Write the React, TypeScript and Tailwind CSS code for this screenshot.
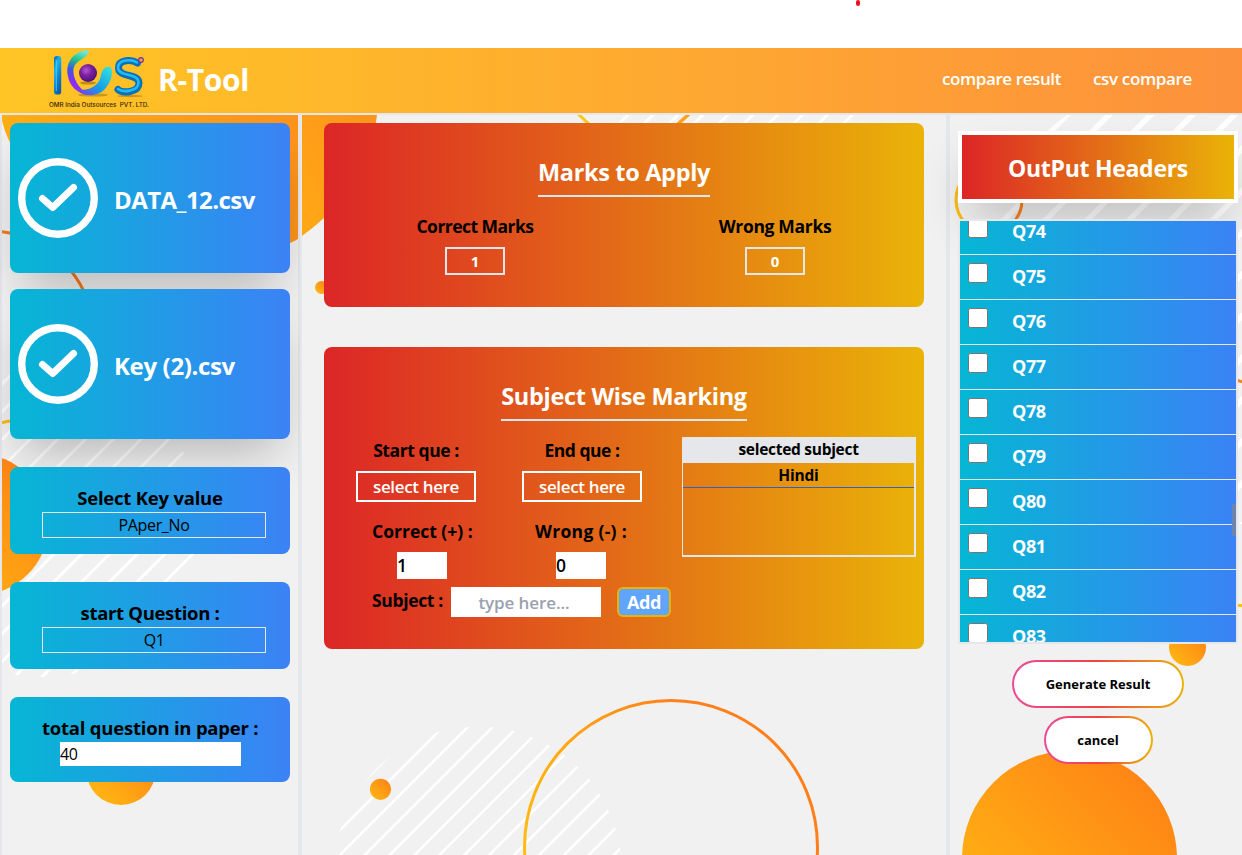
import type { ReactNode } from 'react';

const stripes = (first: number, gap: number, count: number, bottom: number, width: number) =>
  Array.from({ length: count }, (_, k) => {
    const sum = first + gap * k;
    return <line key={k} x1={sum} y1={0} x2={sum - bottom} y2={bottom} stroke="#fff" strokeWidth={width} />;
  });

function Gradients({ id }: { id: string }) {
  return (
    <>
      <linearGradient id={id} x1="0" y1="1" x2="1" y2="0">
        <stop offset="0" stopColor="#ffbd12" />
        <stop offset="1" stopColor="#ff7c16" />
      </linearGradient>
      <linearGradient id={`${id}-ring`} x1="0" y1="0.6" x2="1" y2="0.4">
        <stop offset="0" stopColor="#ffbd12" />
        <stop offset="0.6" stopColor="#ff801a" />
        <stop offset="1" stopColor="#ff801a" />
      </linearGradient>
    </>
  );
}

function LeftBackdrop() {
  return (
    <svg className="absolute top-0 left-0 h-[740px] w-[296px]" viewBox="2 115 296 740">
      <defs>
        <Gradients id="lg" />
        <clipPath id="lc"><circle cx="42" cy="520" r="157" /></clipPath>
        <linearGradient id="lblob" x1="0" y1="0" x2="1" y2="0">
          <stop offset="0" stopColor="#ffae16" />
          <stop offset="1" stopColor="#ff941c" />
        </linearGradient>
      </defs>
      <path d="M2 115 L2 120 C12 170 90 258 180 258 C232 258 276 252 298 239 V115Z" fill="url(#lblob)" />
      <g clipPath="url(#lc)">{stripes(386, 27.75, 14, 800, 3)}</g>
      <path d="M0 231.500 A107 107 0 0 1 92 315" fill="none" stroke="#f5791d" strokeWidth="3" />
      <path d="M2 423 Q6 421 12 421" fill="none" stroke="#fcbb14" strokeWidth="3" />
      <circle cx="-22" cy="524.5" r="70.5" fill="url(#lg)" />
      <circle cx="121" cy="770.5" r="34.5" fill="url(#lg)" />
    </svg>
  );
}

function CenterBackdrop() {
  return (
    <svg className="absolute top-0 left-0 h-[740px] w-[644px]" viewBox="302 115 644 740">
      <defs>
        <Gradients id="cg" />
        <clipPath id="cc"><circle cx="478" cy="870" r="143.500" /></clipPath>
        <linearGradient id="cblob" x1="1" y1="0" x2="0" y2="1">
          <stop offset="0" stopColor="#ff941c" />
          <stop offset="1" stopColor="#ffa815" />
        </linearGradient>
      </defs>
      <path d="M302 115 H377 L376 122 C370 165 345 200 324 218 Q313 228 302 236Z" fill="url(#cblob)" />
      {stripes(743, 24.9, 10, 130, 3)}
      <path d="M578 114 L589 124" stroke="#fcc80d" strokeWidth="3" />
      <path d="M689 114 L678 124" stroke="#fca415" strokeWidth="3.5" />
      <circle cx="321.5" cy="287.5" r="6.5" fill="url(#cg)" />
      <g clipPath="url(#cc)">{stripes(1145, 24.9, 16, 900, 2.5)}</g>
      <circle cx="671" cy="847" r="146.5" fill="none" stroke="url(#cg-ring)" strokeWidth="3" />
      <circle cx="380.5" cy="789.3" r="10.6" fill="url(#cg)" />
    </svg>
  );
}

function RightBackdrop() {
  return (
    <svg className="absolute top-0 left-0 h-[740px] w-[292px]" viewBox="950 115 292 740">
      <defs>
        <Gradients id="rg" />
        <clipPath id="rc"><circle cx="1200" cy="300" r="228" /></clipPath>
      </defs>
      <g clipPath="url(#rc)">{stripes(1182, 41.8, 16, 700, 5.5)}</g>
      <circle cx="989" cy="200" r="33" fill="none" stroke="url(#rg-ring)" strokeWidth="3" />
      <path d="M1236 380 L1243 382" stroke="#ff7f1a" strokeWidth="3" />
      <path d="M1236 605.5 H1243" stroke="#ffbd12" strokeWidth="3" />
      <circle cx="1187.5" cy="647.5" r="18.5" fill="url(#rg)" />
      <circle cx="1069.5" cy="858.5" r="107.5" fill="url(#rg)" />
    </svg>
  );
}

function Logo() {
  return (
    <svg className="-mt-[3px]" width="102" height="62" viewBox="48 48 102 62">
      <defs>
        <linearGradient id="tube" x1="0" y1="0" x2="0.5" y2="1">
          <stop offset="0" stopColor="#0a5fb0" />
          <stop offset="0.35" stopColor="#18b6ee" />
          <stop offset="0.7" stopColor="#0a84cf" />
          <stop offset="1" stopColor="#0b63ab" />
        </linearGradient>
        <linearGradient id="swirl" x1="0.6" y1="0" x2="0.4" y2="1">
          <stop offset="0" stopColor="#6fe8dc" />
          <stop offset="0.25" stopColor="#1fbf8a" />
          <stop offset="0.5" stopColor="#3f55e8" />
          <stop offset="0.75" stopColor="#8a2df0" />
          <stop offset="1" stopColor="#9a2df0" />
        </linearGradient>
        <linearGradient id="wave" x1="0" y1="1" x2="1" y2="0">
          <stop offset="0" stopColor="#8b2df5" />
          <stop offset="0.45" stopColor="#149fe8" />
          <stop offset="1" stopColor="#35e6e0" />
        </linearGradient>
        <radialGradient id="ball" cx="0.4" cy="0.35" r="0.7">
          <stop offset="0" stopColor="#b45ad0" />
          <stop offset="0.45" stopColor="#7a1ea0" />
          <stop offset="1" stopColor="#4a1070" />
        </radialGradient>
      </defs>
      <ellipse cx="93" cy="95" rx="15" ry="1.600" fill="#7a5a10" opacity="0.4" />
      <ellipse cx="130" cy="96" rx="13" ry="1.200" fill="#7a5a10" opacity="0.4" />
      <ellipse cx="88" cy="83" rx="8" ry="1.600" fill="#7a5a10" opacity="0.5" />
      <rect x="54" y="56" width="7.200" height="38.500" rx="2.800" fill="url(#tube)" />
      <path d="M56.300 60 V91" stroke="#5fd4ff" strokeWidth="1" opacity="0.7" />
      <path d="M88.500 50 C75 50.500 66 61 67.500 74 C69 86 77 93.500 88 95 C78 87 72.500 78 73.500 69 C75 62 81 60 85 57 C87 55 88.500 53 88.500 50Z" fill="url(#swirl)" />
      <path d="M76 89 C83 97 97 97 104 90 C111 83 113.500 73 111 67.500 C107 65 102 69 101 75 C100 82 95 88 86 89.500 C82 90 79 90 76 89Z" fill="url(#wave)" />
      <circle cx="88" cy="73" r="9" fill="url(#ball)" />
      <path d="M137.500 63 C132 59.500 118.500 59 118.500 68 C118.500 78 139 73 139 83 C139 93 122 93.500 118 89.500" fill="none" stroke="#0b6fba" strokeWidth="7" strokeLinecap="round" />
      <path d="M137 62.500 C131.500 59 118 59 118 68 C118.500 77 138.500 72.500 138.500 82.500 C138.500 92 122 92.500 118 89" fill="none" stroke="#20bdf0" strokeWidth="2.600" strokeLinecap="round" />
      <circle cx="141" cy="60" r="2.300" fill="#f0a040" stroke="#7a2ca0" strokeWidth="1.200" />
      <text x="49" y="107" textLength="100" lengthAdjust="spacingAndGlyphs" fontSize="6.200" fontWeight="500" fontFamily="Inter, sans-serif" fill="#33270c" xmlSpace="preserve">OMR India Outsources  PVT. LTD.</text>
    </svg>
  );
}

function FileCard({ name, className }: { name: string; className: string }) {
  return (
    <div className="flex h-[150px] items-center gap-4 rounded-lg bg-linear-to-r/srgb from-[#06b6d4] to-[#3b82f6] pl-2 shadow-2xl">
      <svg width="80" height="80" viewBox="0 0 80 80" fill="none" stroke="#fff">
        <circle cx="40" cy="40" r="36.300" strokeWidth="7.400" />
        <path d="M24.500 40.500 L34.700 49.500 L55.500 29.500" strokeWidth="7" strokeLinecap="round" strokeLinejoin="round" />
      </svg>
      <span className={`pt-[3px] text-2xl font-bold text-white ${className}`}>{name}</span>
    </div>
  );
}

function SettingCard({ title, height, className, children }: { title: string; height: string; className: string; children: ReactNode }) {
  return (
    <div className={`relative mt-7 rounded-lg bg-linear-to-r/srgb from-[#06b6d4] to-[#3b82f6] px-8 pt-4 ${height}`}>
      <p className={`h-[29px] text-center text-[18.5px] leading-[30px] font-bold whitespace-nowrap text-black ${className}`}>{title}</p>
      {children}
    </div>
  );
}

function Panel({ title, height, titleClass, children }: { title: string; height: string; titleClass: string; children: ReactNode }) {
  return (
    <section className={`rounded-lg bg-linear-to-r/srgb from-[#dc2626] to-[#eab308] pt-8 ${height}`}>
      <h2 className={`mx-auto flex h-[42px] justify-center border-b-2 border-gray-200 text-[23.5px] leading-[35px] font-bold whitespace-nowrap text-white ${titleClass}`}>{title}</h2>
      {children}
    </section>
  );
}

function PillButton({ label, width }: { label: string; width: string }) {
  return (
    <button className={`h-12 rounded-full bg-linear-to-r/srgb from-[#ec4899] via-[#ef4444] to-[#eab308] p-0.5 ${width}`}>
      <span className="flex h-full items-center justify-center rounded-full bg-white pt-px text-[13px] font-bold text-black">{label}</span>
    </button>
  );
}

const headers = ['Q74', 'Q75', 'Q76', 'Q77', 'Q78', 'Q79', 'Q80', 'Q81', 'Q82', 'Q83'];

export default function App() {
  return (
    <div className="flex h-[855px] w-[1242px] flex-col overflow-hidden bg-white font-['Open_Sans','Noto_Sans',sans-serif] text-black">
      <div className="h-12 shrink-0 pl-[855.500px]">
        <div className="h-1.5 w-[4.500px] rounded-full bg-[#e8141c]" />
      </div>

      <header className="flex h-[65px] shrink-0 items-center bg-linear-to-r/srgb from-[#ffc524] to-[#fd913c] pr-[50px] pl-12">
        <Logo />
        <h1 className="ml-2 pb-[3px] text-[30px] font-bold tracking-[-0.35px] text-white">R-Tool</h1>
        <nav className="ml-auto flex gap-8 pb-[3px] text-[17px] font-semibold text-white">
          <a className="tracking-[-0.4px]">compare result</a>
          <a className="tracking-[-0.35px]">csv compare</a>
        </nav>
      </header>

      <main className="flex min-h-0 flex-1">
        <aside className="relative h-[746px] w-[300px] shrink-0 border-2 border-gray-200 bg-[#f1f1f1]">
          <LeftBackdrop />
          <div className="relative p-2">
            <div className="flex flex-col gap-4">
              <FileCard name="DATA_12.csv" className="tracking-[-0.55px]" />
              <FileCard name="Key (2).csv" className="tracking-[-0.35px]" />
            </div>
            <SettingCard title="Select Key value" height="h-[87px]" className="tracking-[-0.22px]">
              <div className="h-[26px] w-56 border border-gray-200 text-center text-base leading-[25px] tracking-[-0.33px]">PAper_No</div>
            </SettingCard>
            <SettingCard title="start Question :" height="h-[87px]" className="tracking-[-0.32px]">
              <div className="h-[26px] w-56 border border-gray-200 text-center text-base leading-[25px] tracking-[-0.5px]">Q1</div>
            </SettingCard>
            <SettingCard title="total question in paper :" height="h-[85px]" className="tracking-[-0.22px]">
              <input className="ml-[18px] block h-6 w-[181px] bg-white text-base tracking-[-0.3px] outline-none" defaultValue="40" />
            </SettingCard>
          </div>
        </aside>

        <div className="relative h-[746px] w-[648px] shrink-0 border-2 border-gray-200 bg-[#f1f1f1]">
          <CenterBackdrop />
          <div className="relative flex flex-col gap-10 px-[22px] py-2">
            <Panel title="Marks to Apply" height="h-[184px]" titleClass="w-[172px] tracking-[-0.33px]">
              <div className="flex pt-4 text-[17.5px] leading-[27px] font-bold">
                <div className="flex w-[302px] flex-col items-center">
                  <span className="h-[34px] tracking-[-0.53px]">Correct Marks</span>
                  <div className="h-7 w-[60px] border-2 border-gray-200 text-center text-[15px] leading-6 text-white">1</div>
                </div>
                <div className="flex w-[298px] flex-col items-center">
                  <span className="h-[34px] tracking-[-0.32px]">Wrong Marks</span>
                  <div className="h-7 w-[60px] border-2 border-gray-200 text-center text-[15px] leading-6 text-white">0</div>
                </div>
              </div>
            </Panel>

            <Panel title="Subject Wise Marking" height="h-[302px]" titleClass="w-[246px] tracking-[-0.31px]">
              <div className="flex pt-4 pl-8 text-[17.5px] leading-[27px] font-bold">
                <div className="w-[326px]">
                  <div className="flex gap-[46px] text-center">
                    <div className="w-[120px]">
                      <p className="h-[34px] tracking-[-0.42px]">Start que :</p>
                      <div className="h-[31px] border-2 border-white text-[17px] leading-[27px] font-semibold tracking-[-0.35px] text-white">select here</div>
                    </div>
                    <div className="w-[120px]">
                      <p className="h-[34px] tracking-[-0.5px]">End que :</p>
                      <div className="h-[31px] border-2 border-white text-[17px] leading-[27px] font-semibold tracking-[-0.35px] text-white">select here</div>
                    </div>
                  </div>
                  <div className="flex pt-4 pl-4">
                    <div className="flex w-[163px] flex-col">
                      <p className="h-[34px]">Correct (+) :</p>
                      <input className="ml-[25px] h-[27px] w-[50px] bg-white font-semibold outline-none" defaultValue="1" />
                    </div>
                    <div className="flex flex-col">
                      <p className="h-[34px] tracking-[0.3px]">Wrong (-) :</p>
                      <input className="ml-[21px] h-[27px] w-[50px] bg-white font-semibold outline-none" defaultValue="0" />
                    </div>
                  </div>
                  <div className="flex pt-2 pl-4">
                    <span className="w-[79px] shrink-0 tracking-[-0.35px]">Subject :</span>
                    <input className="h-[30px] w-[150px] shrink-0 bg-white pr-1 text-center text-[17px] font-semibold tracking-[-0.1px] outline-none placeholder:text-gray-400" placeholder="type here..." />
                    <button className="ml-4 h-[30px] w-[54px] shrink-0 rounded-md border-2 border-[#eab308] bg-[#60a5fa] text-lg leading-[26px] font-bold tracking-[-0.4px] text-white">Add</button>
                  </div>
                </div>
                <div className="h-[120px] w-[234px] shrink-0 border-r-2 border-b-2 border-l border-gray-200 text-center text-[15.5px]">
                  <div className="h-[26px] bg-gray-200 leading-[25px] tracking-[-0.28px]">selected subject</div>
                  <div className="h-[25px] border-b border-[#2f62c9] leading-[25px] tracking-[-0.2px]">Hindi</div>
                </div>
              </div>
            </Panel>
          </div>
        </div>

        <aside className="relative h-[746px] w-[296px] shrink-0 border-t-2 border-l-2 border-gray-200 bg-[#f1f1f1]">
          <RightBackdrop />
          <div className="relative flex w-[288px] flex-col items-center pt-4 pl-2">
            <div className="flex h-[72px] w-[280px] items-center justify-center border-4 border-white bg-linear-to-r/srgb from-[#dc2626] to-[#eab308] pt-[3px] text-[23px] font-bold tracking-[-0.29px] text-white shadow-2xl">
              OutPut Headers
            </div>
            <div className="relative mt-4 h-[425px] w-[280px] overflow-hidden border-2 border-gray-200">
              <div className="-mt-[11px]">
                {headers.map((q) => (
                  <label key={q} className="flex h-[45px] items-start border-b border-gray-200 bg-linear-to-r/srgb from-[#06b6d4] to-[#3b82f6] pt-2 pl-2">
                    <input type="checkbox" className="h-5 w-5 appearance-none rounded-[2.5px] border border-[#767676] bg-white" />
                    <span className="ml-6 text-lg leading-[26px] font-bold tracking-[-0.4px] text-white">{q}</span>
                  </label>
                ))}
              </div>
              <div className="absolute top-[283px] right-0 h-8 w-1 bg-[#6b83ad]" />
            </div>
            <div className="flex flex-col items-center gap-2 pt-4">
              <PillButton label="Generate Result" width="w-[172px]" />
              <PillButton label="cancel" width="w-[109px]" />
            </div>
          </div>
        </aside>
      </main>
    </div>
  );
}
